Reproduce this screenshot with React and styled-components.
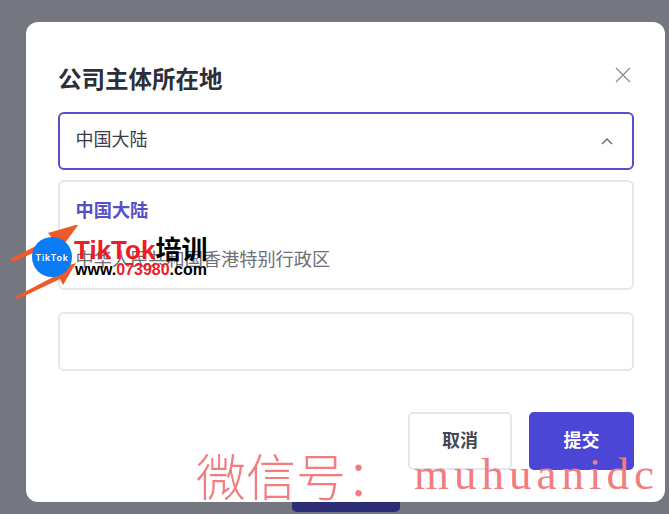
import React from 'react';
import styled, { createGlobalStyle } from 'styled-components';

const GlobalStyle = createGlobalStyle`
  html, body {
    margin: 0;
    height: 100%;
    overflow: hidden;
    background: #74777f;
    font-family: Inter, "Noto Sans CJK SC", sans-serif;
  }
`;

const Page = styled.div`
  position: relative;
  width: 669px;
  height: 514px;
  overflow: hidden;
  background: #74777f;
  padding: 22px 4px 0 26px;
  box-sizing: border-box;
`;

const BehindButton = styled.div`
  position: absolute;
  left: 292px;
  top: 490px;
  width: 108px;
  height: 22px;
  border-radius: 5px;
  background: #2d2c77;
`;

const Modal = styled.div`
  position: relative;
  height: 480px;
  box-sizing: border-box;
  padding: 41px 31px 32px 32px;
  background: #fff;
  border-radius: 12px;
  display: flex;
  flex-direction: column;
`;

const Header = styled.div`
  display: flex;
  align-items: center;
  justify-content: space-between;
  height: 34px;
  margin-bottom: 15px;
`;

const Title = styled.h2`
  margin: 0;
  font-size: 23.5px;
  line-height: 34px;
  font-weight: 700;
  color: #2b2f38;
`;

const CloseButton = styled.button`
  border: 0;
  padding: 0;
  background: none;
  display: flex;
  margin: -10px 3px 0 0;
  color: #8b8e96;
`;

const SelectBox = styled.div`
  height: 58px;
  box-sizing: border-box;
  border: 2px solid #5650c8;
  border-radius: 6px;
  padding: 0 19px 7px 15.5px;
  display: flex;
  align-items: center;
  justify-content: space-between;
  font-size: 18px;
  color: #3a3d45;
`;

const Chevron = styled.svg`
  margin-top: 6px;
`;

const OptionList = styled.div`
  height: 110px;
  box-sizing: border-box;
  margin-top: 10px;
  border: 2px solid #e6e6f0;
  border-radius: 6px;
  padding: 2px 15.5px 0;
  display: flex;
  flex-direction: column;
`;

const Option = styled.div`
  height: 49px;
  display: flex;
  align-items: center;
  font-size: 18.2px;
  white-space: nowrap;
  font-weight: ${(p) => (p.$active ? 700 : 400)};
  color: ${(p) => (p.$active ? '#5650c8' : '#6d7079')};
`;

const TextBox = styled.div`
  height: 59px;
  box-sizing: border-box;
  margin-top: 22px;
  border: 2px solid #e6e6f0;
  border-radius: 6px;
`;

const Footer = styled.div`
  margin-top: 41px;
  display: flex;
  justify-content: flex-end;
  gap: 17px;
`;

const Button = styled.button`
  width: ${(p) => (p.$primary ? '105px' : '104px')};
  height: 58px;
  box-sizing: border-box;
  padding: 0 0 5px;
  border-radius: 5px;
  font-family: inherit;
  font-size: 18px;
  font-weight: 700;
  border: ${(p) => (p.$primary ? '0' : '2px solid #e6e6f0')};
  background: ${(p) => (p.$primary ? '#4c46d6' : '#fff')};
  color: ${(p) => (p.$primary ? '#fff' : '#454852')};
`;

const Stamp = styled.div`
  position: absolute;
  left: 10px;
  top: 225px;
  width: 200px;
  height: 75px;
`;

const StampArt = styled.svg`
  position: absolute;
  left: 0;
  top: 0;
`;

const StampBadge = styled.div`
  position: absolute;
  left: 22px;
  top: 12px;
  width: 40px;
  height: 40px;
  border-radius: 50%;
  background: #0a7cf5;
  color: #fff;
  font-size: 9px;
  font-weight: 600;
  letter-spacing: 0.8px;
  display: flex;
  align-items: center;
  justify-content: center;
`;

const StampTitle = styled.div`
  position: absolute;
  left: 64px;
  top: 9px;
  font-size: 26px;
  line-height: 32px;
  font-weight: 700;
  white-space: nowrap;
  color: #000;
  font-family: "Liberation Sans", "Noto Sans CJK SC", sans-serif;
`;

const StampUrl = styled.div`
  position: absolute;
  left: 65px;
  top: 35px;
  font-size: 16px;
  line-height: 19px;
  font-weight: 700;
  white-space: nowrap;
  color: #000;
  font-family: "Liberation Sans", sans-serif;
`;

const Red = styled.span`
  color: #ee1c25;
`;

const WechatMark = styled.div`
  position: absolute;
  left: 196px;
  top: 444px;
  white-space: nowrap;
  color: #f27d80;
  font-size: 50px;
  line-height: 60px;
  display: flex;
  font-weight: 300;
  font-family: "Noto Sans CJK SC", sans-serif;
`;

const WechatId = styled.span`
  font-family: "Liberation Serif", serif;
  font-size: 45px;
  font-weight: 400;
  letter-spacing: 5px;
  margin-left: 18px;
`;

export default function App() {
  return (
    <Page>
      <GlobalStyle />
      <BehindButton />
      <Modal>
        <Header>
          <Title>公司主体所在地</Title>
          <CloseButton>
            <svg width="16" height="16" viewBox="0 0 16 16" fill="none" stroke="currentColor" strokeWidth="1.4">
              <path d="M1 1 L15 15 M15 1 L1 15" />
            </svg>
          </CloseButton>
        </Header>
        <SelectBox>
          中国大陆
          <Chevron width="12" height="8" viewBox="0 0 12 8" fill="none" stroke="#6d7079" strokeWidth="1.5">
            <path d="M1 7 L6 2 L11 7" />
          </Chevron>
        </SelectBox>
        <OptionList>
          <Option $active>中国大陆</Option>
          <Option>中华人民共和国香港特别行政区</Option>
        </OptionList>
        <TextBox />
        <Footer>
          <Button>取消</Button>
          <Button $primary>提交</Button>
        </Footer>
      </Modal>
      <Stamp>
        <StampArt width="90" height="75" viewBox="0 0 90 75">
          <path d="M0 34 L42 13 L38 8 L69 -1 L52 22 L48 17 L3 37 Z" fill="#ee5a2a" />
          <path d="M5 72 L47 50 L43 45 L66 38 L53 60 L50 54 L8 74 Z" fill="#ee5a2a" />
        </StampArt>
        <StampBadge>TikTok</StampBadge>
        <StampTitle><Red>TikTok</Red>培训</StampTitle>
        <StampUrl>www.<Red>073980</Red>.com</StampUrl>
      </Stamp>
      <WechatMark>
        微信号：<WechatId>muhuanidc</WechatId>
      </WechatMark>
    </Page>
  );
}
